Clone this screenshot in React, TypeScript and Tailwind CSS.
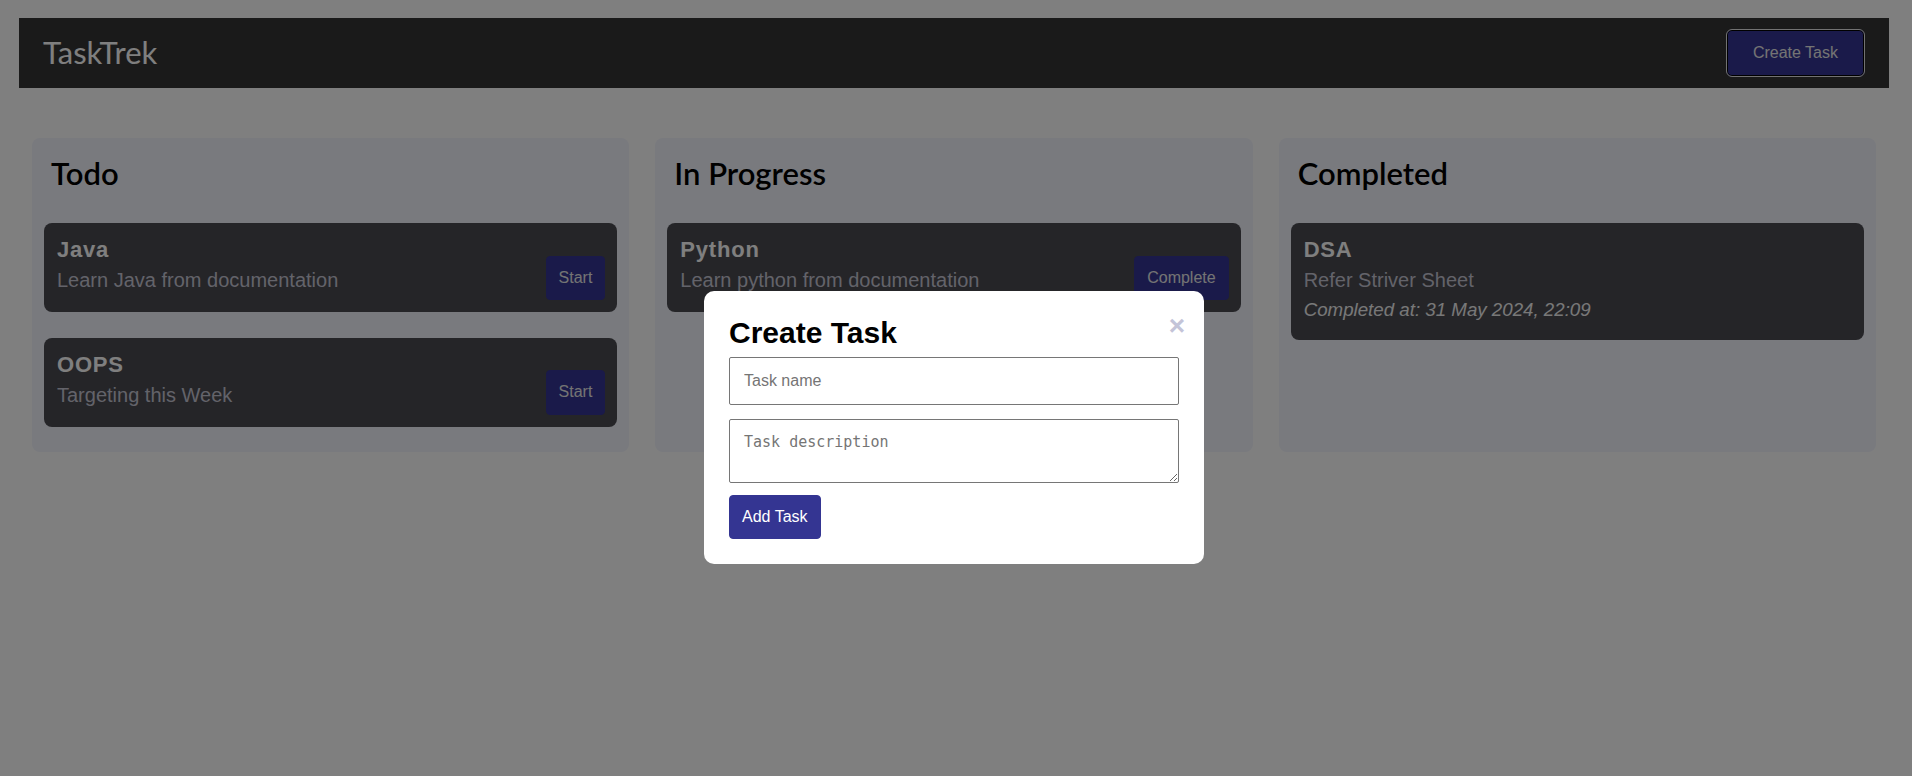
type Task = {
  name: string;
  desc: string;
  action?: string;
  completedAt?: string;
};

type Column = {
  title: string;
  tasks: Task[];
};

const columns: Column[] = [
  {
    title: "Todo",
    tasks: [
      { name: "Java", desc: "Learn Java from documentation", action: "Start" },
      { name: "OOPS", desc: "Targeting this Week", action: "Start" },
    ],
  },
  {
    title: "In Progress",
    tasks: [{ name: "Python", desc: "Learn python from documentation", action: "Complete" }],
  },
  {
    title: "Completed",
    tasks: [{ name: "DSA", desc: "Refer Striver Sheet", completedAt: "31 May 2024, 22:09" }],
  },
];

const TaskCard = ({ task }: { task: Task }) => (
  <div className="rounded-lg bg-[#4a4a50] p-3 flex items-end justify-between">
    <div className="pl-[1px] pb-2">
      <div className="text-[22px] leading-[30px] font-bold tracking-[0.8px] text-white">{task.name}</div>
      <div className="mt-[4px] text-[20px] leading-[23px] text-[#c6c6d4]">{task.desc}</div>
      {task.completedAt && (
        <div className="mt-[7px] text-[18.72px] leading-[21.3px] italic text-[#f0f0f0]">
          Completed at: {task.completedAt}
        </div>
      )}
    </div>
    {task.action && (
      <button className="rounded-[4px] border border-[#343494] bg-[#343494] px-3 py-3 text-base leading-[18.4px] text-[#e8e8e8]">
        {task.action}
      </button>
    )}
  </div>
);

export default function App() {
  return (
    <div className="min-h-screen bg-white pt-[18px] pl-[19px] pr-[23px] font-['Liberation_Sans',Arial,sans-serif]">
      <header className="h-[70px] bg-[#343434] flex items-center justify-between px-6">
        <h1 className="font-['Lato',sans-serif] text-[31px] leading-[1.2] text-white">TaskTrek</h1>
        <button className="rounded-[6px] border border-[#e4e4e4] shadow-[inset_0_0_0_1px_#000] bg-[#343494] px-[26px] py-[14px] text-base leading-[18.4px] text-[#e8e8e8]">
          Create Task
        </button>
      </header>

      <main className="mt-[50px] px-[13px] grid grid-cols-3 gap-[26px]">
        {columns.map((col) => (
          <section key={col.title} className="rounded-lg bg-[#f2f4fd] px-3 pt-3 pb-[25px]">
            <h2 className="font-['Lato',sans-serif] font-semibold text-[31px] leading-[36px] pt-[5px] pb-[32px] pl-[7px] text-black">
              {col.title}
            </h2>
            <div className="flex flex-col gap-[25.6px]">
              {col.tasks.map((t) => (
                <TaskCard key={t.name} task={t} />
              ))}
            </div>
          </section>
        ))}
      </main>

      {/* modal overlay */}
      <div className="fixed inset-0 bg-black/50 pt-[291px] pl-[19px] pr-[23px] flex justify-center items-start">
        <div className="relative w-[500px] rounded-[10px] bg-white p-[25px]">
          <span className="absolute right-[19px] top-[21px] text-[28px] leading-none font-bold text-[#c4c4d8] cursor-pointer">
            ×
          </span>
          <h2 className="text-[30px] leading-[33.5px] font-bold text-black">Create Task</h2>
          <input
            placeholder="Task name"
            className="mt-[7px] block w-full h-[48px] rounded-[2px] border border-[#767676] px-[14px] text-base text-black placeholder:text-[#757575] outline-none"
          />
          <textarea
            placeholder="Task description"
            className="mt-[14px] block w-full h-[64px] rounded-[2px] border border-[#767676] px-[14px] pt-[11px] pb-[14px] font-['DejaVu_Sans_Mono',monospace] text-[15px] text-black placeholder:text-[#757575] outline-none"
          />
          <button className="mt-[12px] block rounded-[4px] border border-[#343592] bg-[#343592] px-3 py-3 text-base leading-[18.4px] text-white">
            Add Task
          </button>
        </div>
      </div>
    </div>
  );
}
